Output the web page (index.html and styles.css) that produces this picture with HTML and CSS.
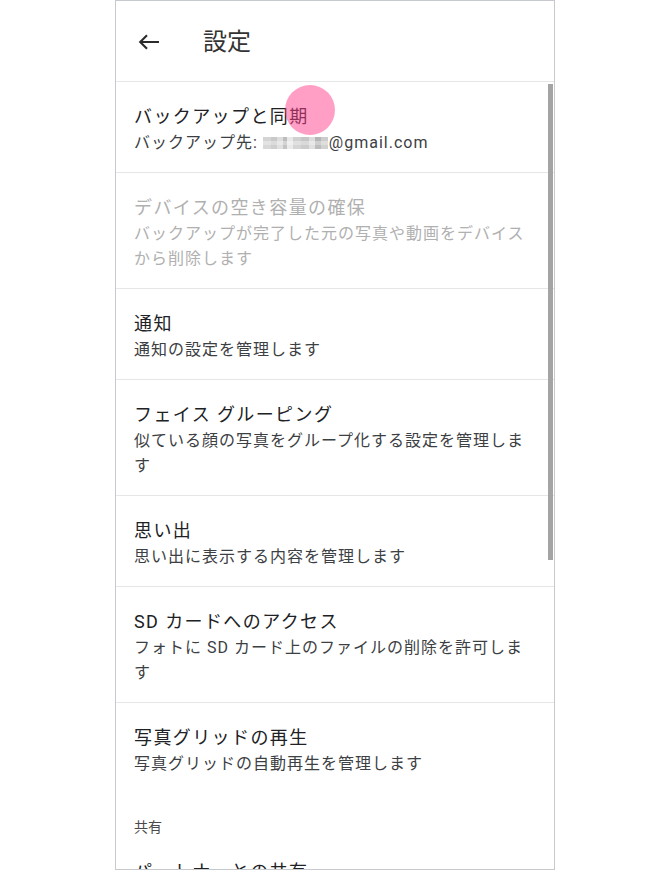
FILE: index.html
```html
<!DOCTYPE html>
<html lang="ja">
<head>
<meta charset="utf-8">
<title>設定</title>
<link rel="stylesheet" href="styles.css">
</head>
<body>
<div class="page">
  <div class="phone">
    <header class="appbar">
      <svg class="back" width="22" height="16" viewBox="0 0 22 16" aria-hidden="true">
        <path d="M21 8H2.5M9 1.2L2.2 8l6.8 6.8" fill="none" stroke="#2b2b2b" stroke-width="2.1"/>
      </svg>
      <h1 class="appbar-title">設定</h1>
    </header>
    <div class="list">
      <div class="item">
        <div class="title">バックアップと同期</div>
        <div class="sub">バックアップ先: <span class="mosaic"></span>@gmail.com</div>
      </div>
      <div class="item disabled">
        <div class="title">デバイスの空き容量の確保</div>
        <div class="sub">バックアップが完了した元の写真や動画をデバイスから削除します</div>
      </div>
      <div class="item">
        <div class="title">通知</div>
        <div class="sub">通知の設定を管理します</div>
      </div>
      <div class="item">
        <div class="title">フェイス グルーピング</div>
        <div class="sub">似ている顔の写真をグループ化する設定を管理します</div>
      </div>
      <div class="item">
        <div class="title">思い出</div>
        <div class="sub">思い出に表示する内容を管理します</div>
      </div>
      <div class="item">
        <div class="title">SD カードへのアクセス</div>
        <div class="sub">フォトに SD カード上のファイルの削除を許可します</div>
      </div>
      <div class="item last">
        <div class="title">写真グリッドの再生</div>
        <div class="sub">写真グリッドの自動再生を管理します</div>
      </div>
      <div class="section">共有</div>
      <div class="item">
        <div class="title">パートナーとの共有</div>
        <div class="sub">パートナーと写真を自動で共有します</div>
      </div>
    </div>
    <div class="scrollbar"></div>
    <div class="touch"></div>
  </div>
</div>
</body>
</html>
```
FILE: styles.css
```css
* { box-sizing: border-box; }
html, body { margin: 0; padding: 0; background: #ffffff; }
body {
  font-family: Roboto, "Noto Sans CJK JP", sans-serif;
  color: #202124;
}
.page {
  display: flex;
  justify-content: center;
}
.phone {
  position: relative;
  width: 440px;
  height: 870px;
  border: 1px solid #c6c9cd;
  overflow: hidden;
  background: #ffffff;
}
.appbar {
  height: 81px;
  border-bottom: 1px solid #e6e6e6;
  display: flex;
  align-items: center;
  padding-left: 22px;
  padding-top: 1px;
}
.back { display: block; flex: none; }
.appbar-title {
  margin: 0 0 0 43px;
  font-size: 24px;
  font-weight: 400;
  line-height: 32px;
  color: #333333;
}
.list { display: flex; flex-direction: column; }
.item {
  padding: 22px 24px 17px 18px;
  border-bottom: 1px solid #e6e6e6;
}
.item.last { border-bottom: none; }
.title {
  font-size: 18px;
  line-height: 26px;
  letter-spacing: 1.4px;
  color: #202124;
}
.sub {
  font-size: 16px;
  line-height: 25px;
  letter-spacing: 1px;
  color: #3c4043;
}
.disabled .title, .disabled .sub { color: #b0b0b0; }
.section {
  padding: 24px 18px 0;
  font-size: 14px;
  line-height: 20px;
  color: #4a4a4a;
}
.mosaic {
  display: inline-block;
  width: 65px;
  height: 12px;
  vertical-align: -1px;
  margin-right: 1px;
  background:
    linear-gradient(180deg, rgba(255,255,255,0) 0 4px, rgba(255,255,255,0.35) 4px 8px, rgba(255,255,255,0.1) 8px),
    linear-gradient(90deg, #d4d4d4 0 8px, #c9c9c9 8px 14px, #dddddd 14px 20px, #bdbdbd 20px 24px, #e8e8e8 24px 30px, #d0d0d0 30px 38px, #c6c6c6 38px 46px, #dcdcdc 46px 52px, #b5b5b5 52px 58px, #cccccc 58px 65px);
}
.scrollbar {
  position: absolute;
  top: 83px;
  right: 1px;
  width: 5px;
  height: 476px;
  background: #a4a4a4;
}
.touch {
  position: absolute;
  left: 169px;
  top: 84px;
  width: 50px;
  height: 50px;
  border-radius: 50%;
  background: rgba(255, 64, 140, 0.5);
}
```
